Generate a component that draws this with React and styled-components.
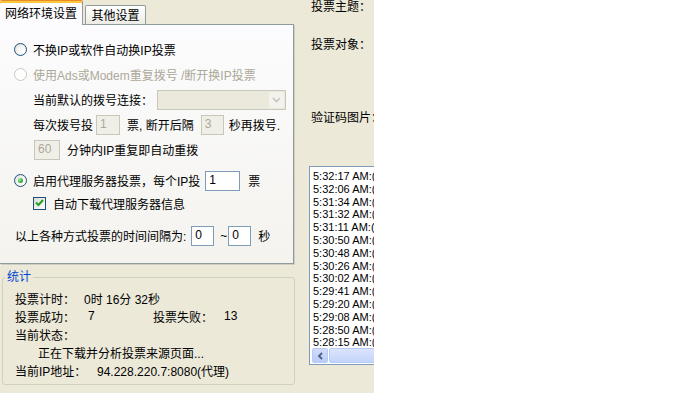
import React from "react";
import styled, { createGlobalStyle } from "styled-components";

const GlobalStyle = createGlobalStyle`
  html, body {
    margin: 0;
    padding: 0;
    background: #ffffff;
  }
  body {
    font-family: "Liberation Sans", "Noto Sans CJK SC", sans-serif;
    font-size: 12px;
    color: #000000;
  }
`;

const Screen = styled.div`
  display: flex;
  width: 683px;
  height: 393px;
  background: #ffffff;
  overflow: hidden;
`;

const Window = styled.div`
  width: 374px;
  height: 393px;
  flex-shrink: 0;
  display: flex;
  background: #ece9d8;
  overflow: hidden;
`;

const LeftColumn = styled.div`
  width: 296px;
  flex-shrink: 0;
  display: flex;
  flex-direction: column;
`;

const TabStrip = styled.div`
  display: flex;
  align-items: flex-end;
  height: 24px;
  position: relative;
  z-index: 1;
`;

const Tab = styled.div`
  box-sizing: border-box;
  display: flex;
  align-items: center;
  justify-content: center;
  width: ${(p) => p.$w}px;
  height: ${(p) => (p.$active ? 25 : 19)}px;
  margin-left: ${(p) => (p.$active ? 0 : 2)}px;
  margin-bottom: ${(p) => (p.$active ? -1 : 0)}px;
  padding-top: 1px;
  border: 1px solid #919b9c;
  border-left: ${(p) => (p.$active ? "none" : "1px solid #919b9c")};
  border-bottom: none;
  border-top: 1px solid ${(p) => (p.$active ? "#e68b2c" : "#919b9c")};
  border-radius: 2px 2px 0 0;
  box-shadow: ${(p) => (p.$active ? "inset 0 2px 0 #ffc73c" : "none")};
  background: ${(p) =>
    p.$active ? "#fcfcfe" : "linear-gradient(#ffffff, #ecebe6)"};
  font-size: 12px;
  line-height: 14px;
  white-space: nowrap;
`;

const TabPanel = styled.div`
  box-sizing: border-box;
  width: 294px;
  height: 240px;
  padding: 12px 0 0 14px;
  border: 1px solid #919b9c;
  border-left: none;
  background: linear-gradient(#fcfcfe, #f4f3ee);
  box-shadow: 1px 1px 0 #d0cec4;
  display: flex;
  flex-direction: column;
`;

const Row = styled.div`
  display: flex;
  align-items: center;
  height: ${(p) => p.$h || 25}px;
  margin-top: ${(p) => p.$mt || 0}px;
  padding-left: ${(p) => p.$indent || 0}px;
  white-space: nowrap;
  color: ${(p) => (p.$disabled ? "#aca899" : "#000000")};
`;

const Radio = styled.span`
  box-sizing: border-box;
  width: 13px;
  height: 13px;
  margin-right: 6px;
  border-radius: 50%;
  border: 1px solid ${(p) => (p.$disabled ? "#cac8bb" : "#1c5180")};
  background: ${(p) =>
    p.$disabled
      ? "#ffffff"
      : "radial-gradient(circle at 65% 65%, #ffffff 20%, #dcdcd7 95%)"};
  display: flex;
  align-items: center;
  justify-content: center;
  flex-shrink: 0;

  &::after {
    content: "";
    display: ${(p) => (p.$checked ? "block" : "none")};
    width: 5px;
    height: 5px;
    border-radius: 50%;
    background: radial-gradient(circle at 35% 35%, #a4e8a4, #21a121 70%);
  }
`;

const Check = styled.span`
  box-sizing: border-box;
  width: 13px;
  height: 13px;
  margin-right: 7px;
  border: 1px solid #1c5180;
  background: linear-gradient(135deg, #dcdcd7, #ffffff);
  display: flex;
  align-items: center;
  justify-content: center;
  flex-shrink: 0;
`;

const TextBox = styled.div`
  box-sizing: border-box;
  width: ${(p) => p.$w}px;
  height: 20px;
  margin: 0 ${(p) => p.$mr || 0}px 0 ${(p) => p.$ml || 0}px;
  padding-left: 3px;
  border: 1px solid ${(p) => (p.$disabled ? "#c9c7ba" : "#7f9db9")};
  background: ${(p) => (p.$disabled ? "#efeee7" : "#ffffff")};
  color: ${(p) => (p.$disabled ? "#aca899" : "#000000")};
  font-size: 12px;
  line-height: 17px;
  flex-shrink: 0;
`;

const Combo = styled.div`
  box-sizing: border-box;
  width: 129px;
  height: 20px;
  margin-left: 4px;
  border: 1px solid #c9c7ba;
  background: #ebe9db;
  display: flex;
  justify-content: flex-end;
  padding: 1px;
`;

const ComboButton = styled.div`
  width: 15px;
  height: 16px;
  border-radius: 2px;
  background: #f3f2ec;
  display: flex;
  align-items: center;
  justify-content: center;
`;

const GroupBox = styled.fieldset`
  box-sizing: border-box;
  width: 293px;
  margin: 6px 0 0 2px;
  padding: 5px 0 5px 12px;
  border: 1px solid #d0d0bf;
  border-radius: 3px;
  min-width: 0;
`;

const Legend = styled.legend`
  margin-left: -10px;
  padding: 0 2px;
  color: #0046d5;
  font-size: 12px;
  line-height: 14px;
`;

const StatRow = styled.div`
  display: flex;
  align-items: center;
  height: 18px;
  padding-left: ${(p) => p.$indent || 0}px;
  white-space: nowrap;
`;

const StatCell = styled.span`
  width: ${(p) => (p.$w ? `${p.$w}px` : "auto")};
  flex-shrink: 0;
`;

const RightColumn = styled.div`
  width: 140px;
  flex-shrink: 0;
  padding-left: 13px;
  display: flex;
  flex-direction: column;
`;

const FieldLabel = styled.div`
  padding-left: 2px;
  margin-top: ${(p) => p.$mt || 0}px;
  height: 14px;
  line-height: 14px;
  white-space: nowrap;
`;

const ListBox = styled.div`
  box-sizing: border-box;
  width: 120px;
  height: 199px;
  margin-top: 41px;
  border: 1px solid #7f9db9;
  background: #ffffff;
  display: flex;
  flex-direction: column;
`;

const ListItems = styled.div`
  flex: 1;
  overflow: hidden;
  padding: 3px 0 0 3px;
  font-size: 11px;
`;

const ListItem = styled.div`
  height: 12.8px;
  line-height: 12.8px;
  white-space: nowrap;
`;

const HScroll = styled.div`
  height: 17px;
  display: flex;
  padding: 1px 0 0 2px;
  box-sizing: border-box;
  background: #fefefe;
`;

const ScrollButton = styled.div`
  box-sizing: border-box;
  width: 16px;
  height: 15px;
  border: 1px solid #b7cbf6;
  border-radius: 2px;
  background: linear-gradient(#d2ddfa, #b9cbf7);
  display: flex;
  align-items: center;
  justify-content: center;
`;

const ScrollThumb = styled.div`
  box-sizing: border-box;
  flex: 1;
  height: 15px;
  margin-left: 1px;
  border: 1px solid #b7cbf6;
  border-radius: 2px;
  background: linear-gradient(#dbe4fc, #c4d4fa);
`;

const times = [
  "5:32:17",
  "5:32:06",
  "5:31:34",
  "5:31:32",
  "5:31:11",
  "5:30:50",
  "5:30:48",
  "5:30:26",
  "5:30:02",
  "5:29:41",
  "5:29:20",
  "5:29:08",
  "5:28:50",
  "5:28:15",
];

const App = () => {
  return (
    <Screen>
      <GlobalStyle />
      <Window>
        <LeftColumn>
          <TabStrip>
            <Tab $active $w={83}>网络环境设置</Tab>
            <Tab $w={61}>其他设置</Tab>
          </TabStrip>
          <TabPanel>
            <Row>
              <Radio />
              不换IP或软件自动换IP投票
            </Row>
            <Row $disabled>
              <Radio $disabled />
              使用Ads或Modem重复拨号 /断开换IP投票
            </Row>
            <Row $indent={19}>
              当前默认的拨号连接：
              <Combo>
                <ComboButton>
                  <svg width="9" height="6" viewBox="0 0 9 6">
                    <path d="M1 1 L4.5 4.5 L8 1" fill="none" stroke="#c9c7ba" strokeWidth="1.6" />
                  </svg>
                </ComboButton>
              </Combo>
            </Row>
            <Row $indent={19}>
              每次拨号投
              <TextBox $disabled $w={24} $ml={3} $mr={7}>1</TextBox>
              票, 断开后隔
              <TextBox $disabled $w={23} $ml={7} $mr={5}>3</TextBox>
              秒再拨号.
            </Row>
            <Row $indent={20}>
              <TextBox $disabled $w={26} $mr={7}>60</TextBox>
              分钟内IP重复即自动重拨
            </Row>
            <Row $mt={6}>
              <Radio $checked />
              启用代理服务器投票，每个IP投
              <TextBox $w={35} $ml={5} $mr={8}>1</TextBox>
              票
            </Row>
            <Row $h={20} $indent={19}>
              <Check>
                <svg width="9" height="8" viewBox="0 0 9 8">
                  <path d="M1 3.5 L3.5 6 L8 1" fill="none" stroke="#21a121" strokeWidth="2" />
                </svg>
              </Check>
              自动下载代理服务器信息
            </Row>
            <Row $mt={10} $indent={1}>
              以上各种方式投票的时间间隔为:
              <TextBox $w={23} $ml={5} $mr={6}>0</TextBox>
              ~
              <TextBox $w={23} $ml={1} $mr={7}>0</TextBox>
              秒
            </Row>
          </TabPanel>
          <GroupBox>
            <Legend>统计</Legend>
            <StatRow>
              <StatCell $w={69}>投票计时：</StatCell>
              <StatCell>0时 16分 32秒</StatCell>
            </StatRow>
            <StatRow>
              <StatCell $w={73}>投票成功：</StatCell>
              <StatCell $w={65}>7</StatCell>
              <StatCell $w={71}>投票失败：</StatCell>
              <StatCell>13</StatCell>
            </StatRow>
            <StatRow>
              <StatCell>当前状态：</StatCell>
            </StatRow>
            <StatRow $indent={23}>
              <StatCell>正在下载并分析投票来源页面...</StatCell>
            </StatRow>
            <StatRow>
              <StatCell $w={82}>当前IP地址：</StatCell>
              <StatCell>94.228.220.7:8080(代理)</StatCell>
            </StatRow>
          </GroupBox>
        </LeftColumn>
        <RightColumn>
          <FieldLabel>投票主题：</FieldLabel>
          <FieldLabel $mt={24}>投票对象：</FieldLabel>
          <FieldLabel $mt={59}>验证码图片：</FieldLabel>
          <ListBox>
            <ListItems>
              {times.map((t) => (
                <ListItem key={t}>{t} AM:(0)</ListItem>
              ))}
            </ListItems>
            <HScroll>
              <ScrollButton>
                <svg width="6" height="8" viewBox="0 0 6 8">
                  <path d="M5 1 L2 4 L5 7" fill="none" stroke="#4d6185" strokeWidth="1.8" />
                </svg>
              </ScrollButton>
              <ScrollThumb />
            </HScroll>
          </ListBox>
        </RightColumn>
      </Window>
    </Screen>
  );
};

export default App;
